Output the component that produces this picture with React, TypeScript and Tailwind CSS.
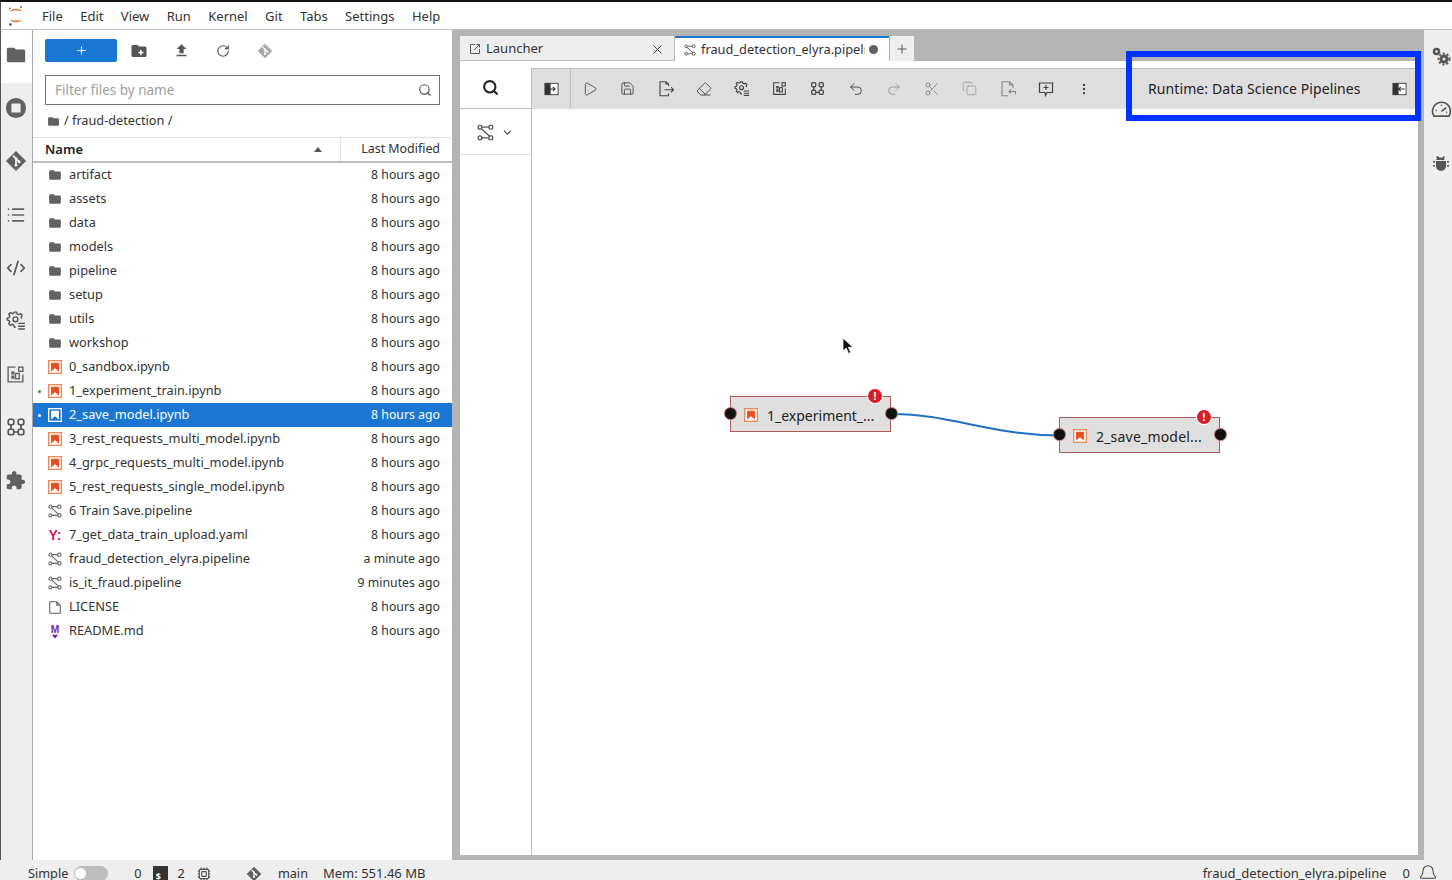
import React from 'react';
import { ChevronDown, Plus, Search, RotateCw, Play, Save, Eraser, Undo2, Redo2, Scissors, Copy, EllipsisVertical, X, Bell, Cpu, List, CodeXml } from 'lucide-react';

type Ic = { className?: string };

const FolderIcon = ({ className = 'w-[18px] h-[18px] text-[#616161]' }: Ic) => (
  <svg viewBox="0 0 24 24" className={className} fill="currentColor">
    <path d="M10 4H3.500C2.700 4 2 4.700 2 5.500v13C2 19.300 2.700 20 3.500 20h17c.8 0 1.500-.7 1.500-1.500v-11C22 6.700 21.300 6 20.500 6H12z" />
  </svg>
);

const NotebookIcon = ({ selected }: { selected?: boolean }) => (
  <svg viewBox="0 0 16 16" className="w-[14px] h-[14px]">
    <rect x="0.75" y="0.75" width="14.5" height="14.500" fill={selected ? 'none' : '#fff'} stroke={selected ? '#fff' : '#ef8a54'} strokeWidth="1.500" />
    <path d="M3.500 3h9v10L8 9.500 3.500 13z" fill={selected ? '#fff' : '#e8501f'} />
  </svg>
);

const PipelineIcon = ({ className = 'w-[14px] h-[14px] text-[#616161]' }: Ic) => (
  <svg viewBox="0 0 16 16" className={className} fill="none" stroke="currentColor" strokeWidth="1.200">
    <circle cx="2.800" cy="3" r="1.800" />
    <circle cx="2.800" cy="13" r="1.800" />
    <rect x="11.200" y="1.200" width="3.600" height="3.600" rx="1.200" />
    <rect x="11.200" y="11.200" width="3.600" height="3.600" rx="1" />
    <path d="M4.600 3h6.600M4 4.500l8 7M4.600 13h6.600" />
  </svg>
);

const GitIcon = ({ className = 'w-[22px] h-[22px] text-[#616161]' }: Ic) => (
  <svg viewBox="0 0 24 24" className={className}>
    <path fill="currentColor" d="M12 1l11 11-11 11L1 12z" />
    <path stroke="#fff" strokeWidth="1.800" fill="none" d="M8.500 6l3.500 3.500M12 9.500v7M12 9.500l3.500 3.500" />
    <circle cx="12" cy="9.500" r="1.500" fill="#fff" />
    <circle cx="12" cy="16.500" r="1.500" fill="#fff" />
    <circle cx="15.500" cy="13" r="1.500" fill="#fff" />
  </svg>
);

const NodesIcon = ({ className = 'w-[20px] h-[20px] text-[#555]' }: Ic) => (
  <svg viewBox="0 0 18 18" className={className} fill="none" stroke="currentColor" strokeWidth="1.500">
    <rect x="2" y="2" width="5" height="5" rx="1.500" />
    <rect x="11" y="2" width="5" height="5" rx="1.500" />
    <rect x="2" y="11" width="5" height="5" rx="1.500" />
    <rect x="11" y="11" width="5" height="5" rx="1.500" />
    <path d="M4.500 7v4M13.500 7v4M7 13.500h4" />
  </svg>
);

const GearListIcon = ({ className = 'w-[20px] h-[20px] text-[#555]' }: Ic) => (
  <svg viewBox="0 0 18 18" className={className} fill="none" stroke="currentColor" strokeWidth="1.300">
    <path d="M9 14.500H7.500l-.5-1.800-1.500-.7-1.600.9-1.400-1.500.9-1.600L2.700 8.700 1 8V6.500l1.800-.5.600-1.500-.9-1.600L4 1.500l1.600.9L7 1.800 7.500 1h2l.5 1.600 1.500.6 1.600-.8 1.400 1.400-.8 1.700.4 1.400" />
    <circle cx="8.500" cy="7.500" r="2.200" />
    <path d="M11 11.200h6M11 13.700h6M11 16.200h6" strokeWidth="1.200" />
  </svg>
);

const TableIcon = ({ className = 'w-[19px] h-[19px] text-[#616161]' }: Ic) => (
  <svg viewBox="0 0 18 18" className={className} fill="none" stroke="currentColor" strokeWidth="1.300">
    <path d="M9 2H2v14h14V9" />
    <rect x="5" y="6" width="3" height="3" fill="currentColor" stroke="none" />
    <rect x="5" y="10" width="3" height="3" fill="currentColor" stroke="none" />
    <rect x="9" y="8" width="3.500" height="5" />
    <rect x="12" y="2" width="4" height="4" />
  </svg>
);

const PuzzleIcon = () => (
  <svg viewBox="0 0 24 24" className="w-[21px] h-[21px] text-[#616161]" fill="currentColor">
    <path d="M20.500 11H19V7c0-1.100-.9-2-2-2h-4V3.500C13 2.100 11.900 1 10.500 1S8 2.100 8 3.500V5H4c-1.100 0-2 .9-2 2v3.800h1.500c1.500 0 2.700 1.200 2.700 2.700S5 16.200 3.500 16.200H2V20c0 1.100.9 2 2 2h3.800v-1.500c0-1.500 1.200-2.700 2.700-2.700s2.700 1.200 2.700 2.700V22H17c1.100 0 2-.9 2-2v-4h1.500c1.400 0 2.500-1.100 2.500-2.500S21.900 11 20.500 11z" />
  </svg>
);

const StopIcon = () => (
  <svg viewBox="0 0 24 24" className="w-[22px] h-[22px] text-[#616161]">
    <circle cx="12" cy="12" r="11" fill="currentColor" />
    <rect x="7" y="7" width="10" height="10" rx="1" fill="#eeeeee" />
  </svg>
);

const YamlIcon = () => (
  <span className="flex w-[14px] justify-center text-[14px] font-bold leading-none text-[#d81b60] [font-family:'Liberation_Sans',sans-serif]">Y:</span>
);

const MarkdownIcon = () => (
  <svg viewBox="0 0 14 16" className="w-[14px] h-[15px] text-[#7b1fa2]" fill="currentColor">
    <text x="7" y="9.500" textAnchor="middle" fontSize="11" fontWeight="700" fontFamily="Liberation Sans, sans-serif">M</text>
    <path d="M3.500 11.500h7L7 15.500z" />
  </svg>
);

const FileIcon = () => (
  <svg viewBox="0 0 16 16" className="w-[15px] h-[15px] text-[#616161]" fill="none" stroke="currentColor" strokeWidth="1.200">
    <path d="M2 1.500h8l4 4v9H2zM10 1.500v4h4" />
  </svg>
);

const PanelIcon = ({ dir }: { dir: 'in' | 'out' }) => (
  <svg viewBox="0 0 16 16" className="w-[15px] h-[14px]">
    <rect x="0.500" y="1.500" width="15" height="13" fill="#fff" stroke="#333" />
    <rect x="0.500" y="1.500" width="6.500" height="13" fill="#333" />
    {dir === 'in' ? (
      <path d="M5 8h7M9.500 5.500L12 8l-2.500 2.500" stroke="#333" fill="none" strokeWidth="1.200" />
    ) : (
      <path d="M14 8H7M9.500 5.500L7 8l2.500 2.500" stroke="#333" fill="none" strokeWidth="1.200" />
    )}
  </svg>
);

type FileRow = { name: string; kind: 'folder' | 'nb' | 'pipe' | 'yaml' | 'file' | 'md'; time?: string; running?: boolean; selected?: boolean };

const files: FileRow[] = [
  { name: 'artifact', kind: 'folder' },
  { name: 'assets', kind: 'folder' },
  { name: 'data', kind: 'folder' },
  { name: 'models', kind: 'folder' },
  { name: 'pipeline', kind: 'folder' },
  { name: 'setup', kind: 'folder' },
  { name: 'utils', kind: 'folder' },
  { name: 'workshop', kind: 'folder' },
  { name: '0_sandbox.ipynb', kind: 'nb' },
  { name: '1_experiment_train.ipynb', kind: 'nb', running: true },
  { name: '2_save_model.ipynb', kind: 'nb', running: true, selected: true },
  { name: '3_rest_requests_multi_model.ipynb', kind: 'nb' },
  { name: '4_grpc_requests_multi_model.ipynb', kind: 'nb' },
  { name: '5_rest_requests_single_model.ipynb', kind: 'nb' },
  { name: '6 Train Save.pipeline', kind: 'pipe' },
  { name: '7_get_data_train_upload.yaml', kind: 'yaml' },
  { name: 'fraud_detection_elyra.pipeline', kind: 'pipe', time: 'a minute ago' },
  { name: 'is_it_fraud.pipeline', kind: 'pipe', time: '9 minutes ago' },
  { name: 'LICENSE', kind: 'file' },
  { name: 'README.md', kind: 'md' },
];

const FileTypeIcon = ({ row }: { row: FileRow }) => {
  switch (row.kind) {
    case 'folder': return <FolderIcon />;
    case 'nb': return <NotebookIcon selected={row.selected} />;
    case 'pipe': return <PipelineIcon />;
    case 'yaml': return <YamlIcon />;
    case 'md': return <MarkdownIcon />;
    default: return <FileIcon />;
  }
};

const menus = ['File', 'Edit', 'View', 'Run', 'Kernel', 'Git', 'Tabs', 'Settings', 'Help'];

const PipelineNode = ({ label, className }: { label: string; className: string }) => (
  <div className={`absolute flex h-[36px] w-[161px] items-center border-[1.5px] border-[#b05c5c] bg-[#dfdfdf] pl-[13px] pt-[2px] text-[14px] text-[#222] ${className}`}>
    <NotebookIcon />
    <span className="ml-[9px] whitespace-nowrap">{label}</span>
    <span className="absolute left-[-6px] top-[11px] h-[11px] w-[11px] rounded-full bg-[#111] ring-1 ring-[#b56a6a]" />
    <span className="absolute right-[-7px] top-[11px] h-[11px] w-[11px] rounded-full bg-[#111] ring-1 ring-[#b56a6a]" />
    <span className="absolute right-[8px] top-[-8px] flex h-[14px] w-[14px] items-center justify-center rounded-full bg-[#da1e28] text-[10px] font-bold leading-none text-white ring-1 ring-white">!</span>
  </div>
);

const SideIcon = ({ children, active }: { children: React.ReactNode; active?: boolean }) => (
  <div className={`flex h-[53.200px] w-full shrink-0 items-center justify-center pb-[3px] pr-[2px] ${active ? 'bg-white' : ''}`}>{children}</div>
);

const ToolIcon = ({ children, className = 'text-[#444]' }: { children: React.ReactNode; className?: string }) => (
  <div className={`flex w-[38px] shrink-0 items-center justify-center pb-[1px] pr-[1px] ${className}`}>{children}</div>
);

export default function App() {
  return (
    <div className="flex h-[880px] w-[1452px] flex-col overflow-hidden bg-[#eeeeee] text-[13px] text-[#333] [font-family:'Noto_Sans',sans-serif]">
      <div className="h-[2px] shrink-0 bg-[#111]" />

      <div className="flex h-[28px] shrink-0 items-center border-b border-[#bdbdbd] bg-white border-l border-l-[#555]">
        <svg viewBox="0 0 20 24" className="ml-[6px] h-[24px] w-[20px]">
          <path d="M2.500 8C5 3.800 13 3.800 15.500 8 13 6 5 6 2.500 8z" fill="#e8772e" />
          <path d="M2.500 15c2.500 4.200 10.500 4.200 13 0-2.500 2-10.500 2-13 0z" fill="#e8772e" />
          <circle cx="14" cy="3" r="1" fill="#666" />
          <circle cx="3" cy="4.500" r="1" fill="#888" />
          <circle cx="3.500" cy="20.500" r="1.200" fill="#444" />
        </svg>
        <div className="ml-[15px] flex gap-[17.400px] pt-[3px] text-[#333]">
          {menus.map((m) => <span key={m}>{m}</span>)}
        </div>
      </div>

      <div className="flex min-h-0 flex-1">
        <div className="flex w-[33px] shrink-0 flex-col border-r border-[#a8a8a8] border-l border-l-[#555] bg-[#eeeeee]">
          <SideIcon active><FolderIcon className="h-[22px] w-[22px] text-[#616161]" /></SideIcon>
          <SideIcon><StopIcon /></SideIcon>
          <SideIcon><GitIcon /></SideIcon>
          <SideIcon><List className="h-[20px] w-[20px] text-[#616161]" /></SideIcon>
          <SideIcon><CodeXml className="h-[20px] w-[20px] text-[#555]" /></SideIcon>
          <SideIcon><GearListIcon /></SideIcon>
          <SideIcon><TableIcon /></SideIcon>
          <SideIcon><NodesIcon /></SideIcon>
          <SideIcon><PuzzleIcon /></SideIcon>
        </div>

        <div className="flex w-[419px] shrink-0 flex-col bg-white">
          <div className="flex h-[45px] shrink-0 items-center pb-[4px] pl-[12px]">
            <div className="flex h-[23px] w-[72px] items-center justify-center rounded-[2px] bg-[#1976d2]">
              <Plus className="h-[13px] w-[13px] text-white" strokeWidth={2} />
            </div>
            <div className="ml-[1px] flex items-center text-[#555]">
              <div className="flex w-[42px] justify-center">
                <svg viewBox="0 0 24 24" className="h-[18px] w-[18px]" fill="currentColor">
                  <path d="M10 4H4C2.900 4 2 4.900 2 6v12c0 1.100.9 2 2 2h16c1.100 0 2-.9 2-2V8c0-1.100-.9-2-2-2h-8z" />
                  <path d="M11 13h2.500v-2.500h2V13H18v2h-2.500v2.500h-2V15H11z" fill="#fff" />
                </svg>
              </div>
              <div className="flex w-[42px] justify-center">
                <svg viewBox="0 0 24 24" className="h-[17px] w-[17px]" fill="currentColor">
                  <path d="M9 16h6v-6h4l-7-7-7 7h4zm-4 2h14v2H5z" />
                </svg>
              </div>
              <div className="flex w-[42px] justify-center"><RotateCw className="h-[14px] w-[14px]" strokeWidth={2} /></div>
              <div className="flex w-[42px] justify-center"><GitIcon className="h-[16px] w-[16px] text-[#a8a8a8]" /></div>
            </div>
          </div>

          <div className="mx-[12px] flex h-[30px] shrink-0 items-center justify-between border border-[#757575] pl-[9px] pr-[7px]">
            <span className="text-[13.500px] text-[#9e9e9e]">Filter files by name</span>
            <Search className="h-[14px] w-[14px] text-[#555]" />
          </div>

          <div className="flex h-[32px] shrink-0 items-center pl-[14px]">
            <FolderIcon className="h-[13px] w-[13px] text-[#616161]" />
            <span className="ml-[4px] text-[12.700px]">/ fraud-detection /</span>
          </div>

          <div className="flex h-[26px] shrink-0 items-center border-y border-t-[#e0e0e0] border-b-[#bdbdbd] border-b-2 font-semibold text-[#222]">
            <div className="flex h-full w-[307px] items-center justify-between pl-[12px] pr-[18px]">
              <span>Name</span>
              <span className="h-0 w-0 border-x-[4px] border-b-[5px] border-x-transparent border-b-[#555]" />
            </div>
            <div className="flex h-full flex-1 items-center justify-end border-l border-[#e0e0e0] pr-[12px] text-[12.400px] font-normal text-[#333]">Last Modified</div>
          </div>

          <div className="flex flex-col">
            {files.map((f) => (
              <div key={f.name} className={`relative flex h-[24px] items-center justify-between pl-[15px] pr-[12px] ${f.selected ? 'bg-[#1976d2] text-white' : ''}`}>
                {f.running && <span className={`absolute left-[5px] top-[11px] h-[3px] w-[3px] rounded-full ${f.selected ? 'bg-white' : 'bg-[#388e3c]'}`} />}
                <div className="flex items-center">
                  <span className="flex w-[14px] items-center justify-center"><FileTypeIcon row={f} /></span>
                  <span className="ml-[7px] whitespace-nowrap text-[12.800px]">{f.name}</span>
                </div>
                <span className="whitespace-nowrap text-[12.300px]">{f.time ?? '8 hours ago'}</span>
              </div>
            ))}
          </div>
        </div>

        <div className="flex min-w-0 flex-1 flex-col bg-[#b4b4b4] pb-[5px] pl-[8px] pr-[6px]">
          <div className="flex h-[31px] shrink-0 items-end">
            <div className="flex h-[25px] w-[214px] items-center justify-between border-b border-[#bdbdbd] bg-[#eeeeee] pl-[9px] pr-[9px] pt-[2px]">
              <div className="flex items-center gap-[5px]">
                <svg viewBox="0 0 16 16" className="h-[12px] w-[12px] text-[#555]" fill="none" stroke="currentColor" strokeWidth="1.300">
                  <path d="M8 2H2v12h12V8M7 9l7-7M10 2h4v4" />
                </svg>
                <span>Launcher</span>
              </div>
              <X className="h-[15px] w-[15px] text-[#333]" strokeWidth={1.500} />
            </div>
            <div className="ml-[1px] flex h-[25px] w-[214px] items-center justify-between border-t-2 border-[#1976d2] bg-white pl-[9px] pr-[11px]">
              <div className="flex items-center gap-[5px]">
                <PipelineIcon className="h-[12px] w-[12px] text-[#555]" />
                <span className="w-[164px] overflow-hidden whitespace-nowrap text-[12.800px]">fraud_detection_elyra.pipeline</span>
              </div>
              <span className="h-[9px] w-[9px] rounded-full bg-[#616161]" />
            </div>
            <div className="ml-[1px] flex h-[25px] w-[24px] items-center justify-center bg-[#eeeeee]">
              <Plus className="h-[14px] w-[14px] text-[#444]" strokeWidth={1.500} />
            </div>
          </div>

          <div className="h-[7px] shrink-0 bg-white" />

          <div className="flex min-h-0 flex-1 bg-white">
            <div className="flex w-[72px] shrink-0 flex-col border-r border-[#bdbdbd]">
              <div className="flex h-[41px] items-center justify-center border-b border-[#bdbdbd] pb-[1px] pr-[10px]">
                <Search className="h-[17px] w-[17px] text-[#222]" strokeWidth={3} />
              </div>
              <div className="flex h-[46px] items-center justify-center gap-[7px] border-b border-[#e0e0e0] pt-[1px]">
                <PipelineIcon className="h-[17px] w-[17px] text-[#555]" />
                <ChevronDown className="h-[13px] w-[13px] text-[#444]" />
              </div>
            </div>

            <div className="flex min-w-0 flex-1 flex-col">
              <div className="flex h-[41px] shrink-0 items-center border-t border-[#bdbdbd] bg-[#dedede]">
                <div className="flex h-full w-[39px] items-center justify-center border-r border-[#bdbdbd] pb-[1px]">
                  <PanelIcon dir="in" />
                </div>
                <ToolIcon><Play className="h-[16px] w-[16px]" strokeWidth={1.300} /></ToolIcon>
                <ToolIcon><Save className="h-[15px] w-[15px]" strokeWidth={1.400} /></ToolIcon>
                <ToolIcon>
                  <svg viewBox="0 0 16 16" className="h-[16px] w-[16px]" fill="none" stroke="currentColor" strokeWidth="1.100">
                    <path d="M10.500 5V3L8 .7H2v14h8.500V12.500M8 .7V3h2.500M6.500 8.700h9M13 6l2.500 2.700L13 11.300" />
                  </svg>
                </ToolIcon>
                <ToolIcon><Eraser className="h-[16px] w-[16px]" strokeWidth={1.400} /></ToolIcon>
                <ToolIcon><GearListIcon className="h-[16px] w-[16px]" /></ToolIcon>
                <ToolIcon><TableIcon className="h-[15px] w-[15px]" /></ToolIcon>
                <ToolIcon><NodesIcon className="h-[15px] w-[15px]" /></ToolIcon>
                <ToolIcon><Undo2 className="h-[16px] w-[16px]" strokeWidth={1.400} /></ToolIcon>
                <ToolIcon className="text-[#999]"><Redo2 className="h-[16px] w-[16px]" strokeWidth={1.400} /></ToolIcon>
                <ToolIcon className="text-[#888]"><Scissors className="h-[16px] w-[16px]" strokeWidth={1.400} /></ToolIcon>
                <ToolIcon className="text-[#999]"><Copy className="h-[15px] w-[15px]" strokeWidth={1.300} /></ToolIcon>
                <ToolIcon className="text-[#888]">
                  <svg viewBox="0 0 16 16" className="h-[16px] w-[16px]" fill="none" stroke="currentColor" strokeWidth="1.100">
                    <path d="M9.500 .7H2v14h6M9.500 .7V4H13v3M9.500 .7L13 4M15.500 13.500V10.500H9M11 8.500l-2 2 2 2" />
                  </svg>
                </ToolIcon>
                <ToolIcon>
                  <svg viewBox="0 0 16 16" className="h-[16px] w-[16px]" fill="none" stroke="currentColor" strokeWidth="1.200">
                    <path d="M1.500 2h13v9.500H9l-1.500 3-.5-3H1.500zM8 4v5M5.500 6.500h5" />
                  </svg>
                </ToolIcon>
                <ToolIcon><EllipsisVertical className="h-[14px] w-[14px]" strokeWidth={2} /></ToolIcon>
                <span className="ml-[45px] whitespace-nowrap pb-[2px] text-[14px] tracking-[0.1px] text-[#222]">Runtime: Data Science Pipelines</span>
                <div className="ml-auto mr-[11px] pb-[1px]"><PanelIcon dir="out" /></div>
              </div>

              <div className="relative min-h-0 flex-1">
                <svg viewBox="0 0 180 30" className="absolute left-[358px] top-[303px] h-[30px] w-[180px]" fill="none">
                  <path d="M2 2C60 2 100 23 170 23.500" stroke="#1f6fc4" strokeWidth="2" />
                </svg>
                <PipelineNode label="1_experiment_..." className="left-[198px] top-[287px]" />
                <PipelineNode label="2_save_model..." className="left-[527px] top-[308px] tracking-[0.2px]" />
                <svg viewBox="0 0 12 18" className="absolute left-[310px] top-[228px] h-[18px] w-[12px]">
                  <path d="M1 1v13l3.200-3 2.300 5.500 2.200-1-2.300-5.200H11z" fill="#111" stroke="#fff" strokeWidth="0.800" />
                </svg>
              </div>
            </div>
          </div>
        </div>

        <div className="flex w-[28px] shrink-0 flex-col items-start overflow-hidden bg-[#eeeeee] text-[#555]">
          <div className="flex h-[53px] w-full items-center justify-center pb-[1px] pl-[6px]">
            <svg viewBox="0 0 20 20" className="h-[20px] w-[20px]" fill="none" stroke="currentColor">
              <circle cx="5.500" cy="5.500" r="2.500" strokeWidth="2.500" />
              <circle cx="13" cy="13" r="3" strokeWidth="3" />
              <circle cx="13" cy="13" r="5.500" strokeWidth="2" strokeDasharray="2 2" />
            </svg>
          </div>
          <div className="flex h-[53px] w-full items-center justify-center pl-[6px]">
            <svg viewBox="0 0 22 20" className="h-[19px] w-[21px] shrink-0" fill="none" stroke="currentColor" strokeWidth="1.800">
              <path d="M3 17a9.500 9.500 0 1 1 16 0zM11 12l5-4M5 11h1M11 5v1M16 13h1" />
            </svg>
          </div>
          <div className="flex h-[53px] w-full items-center justify-center pl-[6px]">
            <svg viewBox="0 0 20 20" className="h-[20px] w-[20px]" fill="currentColor">
              <path d="M7 3l1.500 1.500h3L13 3l1 1-1.200 1.500c.5.500.8 1 1 1.500H5.200c.2-.5.5-1 1-1.500L5 4zM5 8h10v5a5 5 0 0 1-10 0zM2 8h2v1.500H2zM16 8h2v1.500h-2zM2 12h2v1.500H2zM16 12h2v1.500h-2z" />
            </svg>
          </div>
        </div>
      </div>

      <div className="flex h-[20px] shrink-0 items-start justify-between overflow-hidden bg-[#eeeeee] pt-[4px] text-[#333]">
        <div className="flex items-center pl-[28px] text-[12.700px]">
          <span>Simple</span>
          <span className="ml-[6px] flex h-[15px] w-[34px] shrink-0 items-center rounded-full bg-[#bdbdbd] pl-[1px]">
            <span className="h-[11px] w-[11px] rounded-full bg-white" />
          </span>
          <span className="ml-[26px]">0</span>
          <span className="ml-[11px] flex h-[15px] w-[15px] items-end justify-center bg-[#333] text-[9px] font-bold leading-none text-white">$_</span>
          <span className="ml-[10px]">2</span>
          <Cpu className="ml-[12px] h-[14px] w-[14px] text-[#555]" />
          <GitIcon className="ml-[35px] h-[16px] w-[16px] text-[#616161]" />
          <span className="ml-[16px]">main</span>
          <span className="ml-[15px] text-[13px]">Mem: 551.46 MB</span>
        </div>
        <div className="flex items-center pr-[14px]">
          <span>fraud_detection_elyra.pipeline</span>
          <span className="ml-[16px]">0</span>
          <Bell className="ml-[8px] h-[20px] w-[20px] text-[#444]" strokeWidth={1.300} />
        </div>
      </div>

      <div className="absolute left-[1126px] top-[51px] h-[70px] w-[295px] border-[6px] border-[#0033ff]" />
    </div>
  );
}
